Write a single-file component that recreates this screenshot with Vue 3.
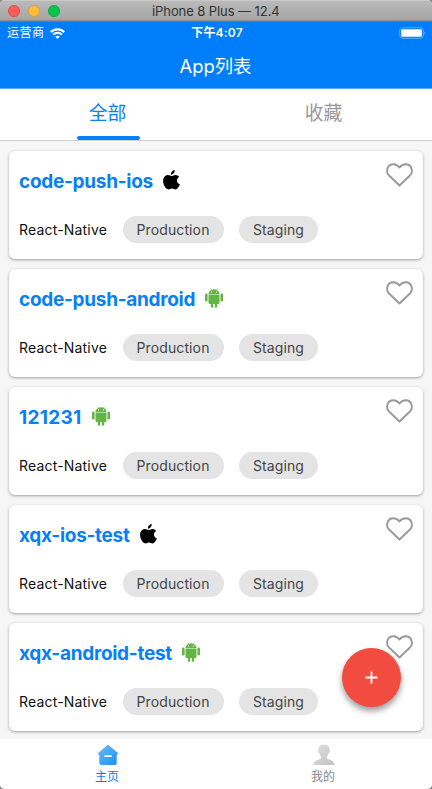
<script setup>
import { ref } from 'vue'

const apps = ref([
  { name: 'code-push-ios', os: 'ios' },
  { name: 'code-push-android', os: 'android' },
  { name: '121231', os: 'android' },
  { name: 'xqx-ios-test', os: 'ios' },
  { name: 'xqx-android-test', os: 'android' },
])

const isNumeric = (name) => /^\d+$/.test(name)
</script>

<template>
  <div class="window">
    <div class="titlebar">
      <i class="light red"></i><i class="light amber"></i><i class="light green"></i>
      <span class="device">iPhone 8 Plus — 12.4</span>
    </div>
    <header class="header">
      <div class="status">
        <div class="carrier">
          <span>运营商</span>
          <svg width="15" height="11" viewBox="0 0 15 11" fill="none">
            <path d="M.8 4.100C4.500 .4 10.500 .4 14.200 4.100" stroke="#fff" stroke-width="2.200" />
            <path d="M3.100 6.600C5.600 4.200 9.400 4.200 11.900 6.600" stroke="#fff" stroke-width="2" />
            <path d="M5.200 8.600Q7.500 6.700 9.800 8.600L7.500 10.900Z" fill="#fff" />
          </svg>
        </div>
        <b class="time">下午4:07</b>
        <svg class="battery" width="28" height="12" viewBox="0 0 28 12">
          <rect x=".7" y=".7" width="23.600" height="10.600" rx="3" fill="none" stroke="#fff" stroke-opacity=".35" />
          <rect x="2.200" y="2.300" width="20.600" height="7.400" rx="1.300" fill="#fff" />
          <path d="M25.500 4.200Q27.300 6 25.500 7.800Z" fill="#fff" fill-opacity=".5" />
        </svg>
      </div>
      <h1>App列表</h1>
    </header>
    <nav class="tabs">
      <div class="tab active"><span>全部</span></div>
      <div class="tab"><span>收藏</span></div>
    </nav>
    <main class="list">
      <article v-for="app in apps" :key="app.name" class="card">
        <div class="top">
          <h2 :class="{ numeric: isNumeric(app.name) }">{{ app.name }}</h2>
          <svg v-if="app.os === 'ios'" class="apple" viewBox="0 0 17 20" width="17" height="20">
            <path d="M11.700 0C11.900 2.400 10 4.800 7.900 4.700C7.600 2.500 9.600 .3 11.700 0ZM8.700 6C9.600 6 10.700 4.900 12.600 4.900C14.200 5 15.400 5.700 16.200 6.900C12.900 8.900 13.400 13 16.900 14.200C15.900 16.900 14.300 19.300 12.600 19.400C11.200 19.500 10.700 18.500 9 18.500C7.300 18.500 6.700 19.400 5.400 19.400C2.700 19.500 .2 15 .1 11.100C0 7.400 2.300 5 4.900 5C6.500 5 7.700 6 8.700 6Z" />
          </svg>
          <svg v-else class="robot" viewBox="0 0 18 20" width="18" height="20" fill="#65b544">
            <path d="M3.500 5.900C3.600 4 4.600 2.700 6.200 1.900L5.200.3L5.500.1L6.600 1.700Q9 .9 11.400 1.700L12.500.1L12.800.3L11.800 1.900C13.400 2.700 14.400 4 14.500 5.900Z" />
            <path d="M3.500 6.500H14.500V14.800Q14.500 16 13.300 16H12.200V18.600A1.200 1.200 0 0 1 9.800 18.600V16H8.200V18.600A1.200 1.200 0 0 1 5.800 18.600V16H4.700Q3.500 16 3.500 14.800Z" />
            <rect x="0" y="5.600" width="2.600" height="8" rx="1.300" />
            <rect x="15.400" y="5.600" width="2.600" height="8" rx="1.300" />
            <circle cx="6.500" cy="3.900" r=".6" fill="#fff" /><circle cx="11.500" cy="3.900" r=".6" fill="#fff" />
          </svg>
          <svg class="heart" viewBox="0 0 28 24" width="28" height="24" fill="none" stroke="#999" stroke-width="1.900" stroke-linejoin="round">
            <path d="M14.500 22.500L3.800 12.200C.8 9 1.800 1.300 8.300 1.200C11 1.200 13 2.500 14.500 4.500C16 2.500 18 1.200 20.700 1.200C27.200 1.300 28.200 9 25.200 12.200Z" />
          </svg>
        </div>
        <div class="meta">
          <span class="platform">React-Native</span>
          <span class="chip production">Production</span>
          <span class="chip staging">Staging</span>
        </div>
      </article>
    </main>
    <footer class="tabbar">
      <div class="item on">
        <svg width="22" height="22" viewBox="0 0 22 22">
          <defs><linearGradient id="home" x1="0" y1="0" x2="1" y2="1"><stop stop-color="#6bbcfb" /><stop offset="1" stop-color="#168ff5" /></linearGradient></defs>
          <path d="M10 1.400Q11 .6 12 1.400L20.600 8.700Q21.600 9.800 20.300 10.600L19.700 11V19Q19.700 21 17.700 21H4.300Q2.300 21 2.300 19V11L1.700 10.600Q.4 9.800 1.400 8.700Z" fill="url(#home)" />
          <rect x="7.300" y="11.200" width="7.400" height="1.900" rx=".5" fill="#fff" />
        </svg>
        <span>主页</span>
      </div>
      <div class="item">
        <svg width="22" height="22" viewBox="0 0 22 22">
          <defs><linearGradient id="person" x1="0" y1="0" x2="1" y2="1"><stop stop-color="#dedede" /><stop offset="1" stop-color="#c4c4c4" /></linearGradient></defs>
          <path d="M11 .7C14.800 .7 16.800 2.800 16.600 6.200C17.200 6.700 16.800 8.800 15.800 9.100C15.300 11 14.600 12 13.900 12.700V14.400C16 15.900 21 15.500 21.500 21H.5C1 15.500 6 15.900 8.100 14.400V12.700C7.400 12 6.700 11 6.200 9.100C5.200 8.800 4.800 6.700 5.400 6.200C5.200 2.800 7.200 .7 11 .7Z" fill="url(#person)" />
        </svg>
        <span>我的</span>
      </div>
    </footer>
    <button class="fab" aria-label="add">
      <svg width="13" height="13" viewBox="0 0 13 13"><path d="M6.500 .5V12.500M.5 6.500H12.500" stroke="#fff" stroke-width="1.800" /></svg>
    </button>
  </div>
</template>

<style>
body { background: #8b8b8b; }
</style>

<style scoped>
.window { position: relative; width: 432px; height: 789px; box-sizing: border-box; overflow: hidden; display: flex; flex-direction: column; background: #f6f6f6; border-radius: 5px; font-family: Inter, "Noto Sans CJK SC", sans-serif; }
.titlebar { flex: none; height: 22px; box-sizing: border-box; display: flex; align-items: center; gap: 8px; padding-left: 8px; background: linear-gradient(#d9d9d9 0, #bababa 1px, #a5a5a5 20px, #777 21px); }
.light { width: 12px; height: 12px; box-sizing: border-box; border-radius: 50%; border: 1px solid; }
.red { background: #ff5d57; border-color: #df4744; }
.amber { background: #ffbb3a; border-color: #dea034; }
.green { background: #07c74b; border-color: #10a63c; }
.device { margin-left: 84px; font-size: 13px; letter-spacing: -.08px; line-height: 24px; color: #333; white-space: nowrap; }
.header { flex: none; height: 67px; box-sizing: border-box; background: linear-gradient(#007df8 66px, #57a8fa 66px); color: #fff; }
.status { height: 22px; display: grid; grid-template-columns: 1fr auto 1fr; align-items: center; padding: 0 5px 0 7px; font-size: 12px; line-height: 22px; }
.carrier { display: flex; align-items: center; gap: 5px; letter-spacing: .5px; }
.time { font-weight: 600; letter-spacing: .2px; }
.battery { justify-self: end; }
h1 { margin: 0; font-size: 18.400px; font-weight: 400; line-height: 45px; text-align: center; padding-right: 1px; }
.tabs { flex: none; height: 52px; box-sizing: border-box; display: flex; background: #fff; border-bottom: 1px solid #d0d0d0; }
.tab { flex: 1; display: flex; flex-direction: column; align-items: center; justify-content: space-between; height: 51px; font-size: 18.800px; line-height: 50px; color: #999; }
.tab span { padding-right: 1px; }
.active { color: #0a80f7; }
.active::after { content: ""; flex: none; width: 63px; height: 4px; margin-top: -3px; border-radius: 3px; background: #087ff5; }
.list { flex: 1; min-height: 0; display: flex; flex-direction: column; gap: 10px; padding: 10px 9px 0; overflow: hidden; }
.card { flex: none; height: 108.100px; box-sizing: border-box; padding: 12px 10px 0; background: #fff; border-radius: 6px; box-shadow: 0 1px 3px rgba(0, 0, 0, .36); }
.top { display: flex; height: 36px; }
h2 { margin: 0; font-size: 19px; line-height: 38px; font-weight: 700; letter-spacing: -.29px; color: #087ff5; white-space: nowrap; }
.numeric { letter-spacing: .3px; }
.apple { margin: 7px 0 0 10px; }
.robot { margin: 7px 0 0 10px; }
.heart { margin-left: auto; }
.meta { display: flex; align-items: center; height: 27px; margin-top: 17px; font-size: 14px; letter-spacing: .12px; }
.platform { width: 104px; color: #111; line-height: 28px; letter-spacing: .18px; white-space: nowrap; }
.chip { height: 27px; box-sizing: border-box; border-radius: 14px; background: #e4e4e4; color: #444; line-height: 27px; text-align: center; }
.production { width: 101px; margin-right: 15px; padding-right: 1px; }
.staging { width: 79px; }
.tabbar { flex: none; height: 50px; display: flex; background: #fff; }
.item { flex: 1; display: flex; flex-direction: column; align-items: center; padding-top: 5px; font-size: 12px; line-height: 21px; color: #888; }
.item span { padding-right: 2px; }
.on { color: #087ff5; }
.fab { position: absolute; right: 31px; bottom: 82px; width: 59px; height: 59px; padding: 0 1px 1px 0; border: 0; border-radius: 50%; display: grid; place-items: center; background: #f24b3f; box-shadow: 0 4px 6px rgba(0, 0, 0, .4); }
</style>
